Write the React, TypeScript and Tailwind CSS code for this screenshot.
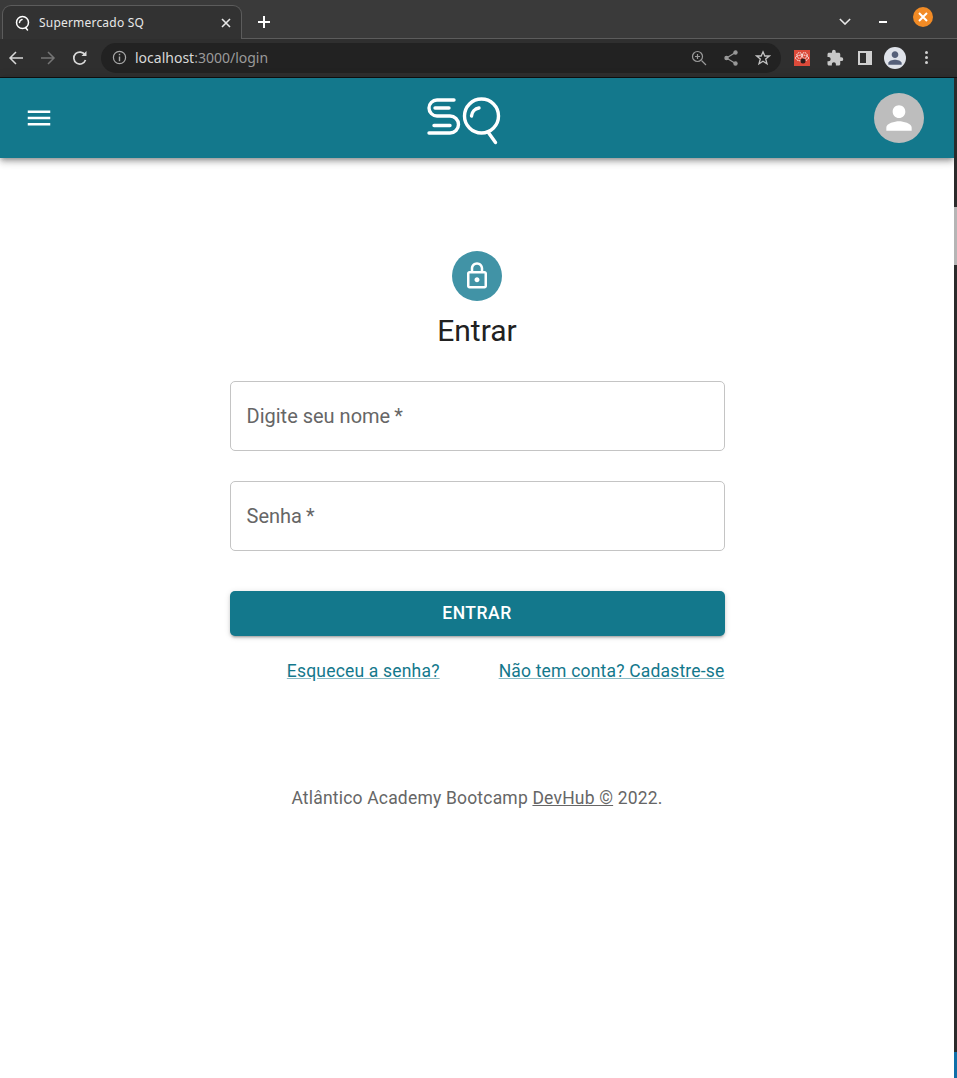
import React from "react";

const Mui = ({ d, size, className }: { d: string; size: number; className?: string }) => (
  <svg viewBox="0 0 24 24" width={size} height={size} fill="currentColor" className={className}>
    <path d={d} />
  </svg>
);

const Stroke = ({ children, size = 16, className }: { children: React.ReactNode; size?: number; className?: string }) => (
  <svg viewBox="0 0 16 16" width={size} height={size} fill="none" stroke="currentColor" strokeWidth={1.5} className={className}>
    {children}
  </svg>
);

const Logo = () => (
  <svg viewBox="0 0 76 48" width={76} height={48} fill="none" stroke="#fff" strokeWidth={3.4} strokeLinecap="round">
    <path d="M28 3H11A8 8 0 0 0 11 19H24A8.5 8.5 0 0 1 24 36H3" />
    <path d="M9 11H23M8 28.5H24" />
    <circle cx="55.5" cy="19" r="17" />
    <path d="M62 35L69.500 45.500" />
    <path d="M45.500 19A9 9 0 0 1 53 11" />
  </svg>
);

const Field = ({ label }: { label: string }) => (
  <div className="flex h-[70px] items-center rounded-[5px] border border-[#c4c4c4] px-4 text-[20px] text-[#666666]">
    {label}
    {"\u2009*"}
  </div>
);

export default function App() {
  return (
    <div className="flex min-h-[1078px] flex-col bg-white font-['Roboto',sans-serif]">
      {/* Browser tabs */}
      <div className="flex h-[39px] items-end bg-[#3a3a3a] font-['Noto_Sans',sans-serif]">
        <div className="ml-[2px] flex h-[34px] w-[240px] items-center rounded-t-[9px] border border-b-0 border-[#5c5c5c] bg-[#323232] pl-[12px] pr-[10px] text-[#e8e8e8]">
          <svg viewBox="0 0 16 16" width={16} height={16} fill="none" stroke="#fff" strokeWidth={1.5} strokeLinecap="round">
            <circle cx="7.500" cy="7.500" r="6" />
            <path d="M10.500 12.500L12.500 15M4.500 7.500A3.500 3.500 0 0 1 7 4.500" />
          </svg>
          <span className="ml-[8px] flex-1 text-[12px] tracking-[0.2px]">Supermercado SQ</span>
          <svg viewBox="0 0 10 10" width={10} height={10} stroke="#e8e8e8" strokeWidth={1.6}>
            <path d="M1 1L9 9M9 1L1 9" />
          </svg>
        </div>
        <div className="flex h-full flex-1 items-center border-b border-[#5c5c5c] pl-[15px] pr-[24px] pt-[5px] text-white">
          <svg viewBox="0 0 14 14" width={14} height={14} stroke="#fff" strokeWidth={2}>
            <path d="M7 1V13M1 7H13" />
          </svg>
          <svg viewBox="0 0 14 8" width={12} height={7} fill="none" stroke="#e8e8e8" strokeWidth={1.8} className="ml-auto">
            <path d="M1 1L7 7L13 1" />
          </svg>
          <div className="ml-[28px] h-[2px] w-[8px] bg-white" />
          <div className="ml-[26px] mt-[-9px] flex h-[20px] w-[20px] items-center justify-center rounded-full bg-[#f28b25]">
            <svg viewBox="0 0 10 10" width={10} height={10} stroke="#fff" strokeWidth={2}>
              <path d="M1 1L9 9M9 1L1 9" />
            </svg>
          </div>
        </div>
      </div>

      {/* Browser toolbar */}
      <div className="flex h-[39px] items-center border-b border-[#111111] bg-[#2f2f2f] pb-[1px]">
        <Stroke className="ml-[8px] text-[#d8d8d8]">
          <path d="M15 8H2M8 2L2 8L8 14" />
        </Stroke>
        <Stroke className="ml-[16px] text-[#757575]">
          <path d="M1 8H14M8 2L14 8L8 14" />
        </Stroke>
        <Stroke className="ml-[16px] text-[#d8d8d8]">
          <path d="M13.500 10A6 6 0 1 1 13 5" strokeWidth={1.7} />
          <path d="M14.500 1V6H9.500Z" fill="currentColor" stroke="none" />
        </Stroke>
        <div className="ml-[13px] flex h-[30px] w-[680px] items-center rounded-full bg-[#222222] pl-[11px] pr-[10px] font-['Noto_Sans',sans-serif] text-[14px]">
          <Stroke size={15} className="text-[#a8a8a8]">
            <circle cx="8" cy="8" r="6.500" strokeWidth={1.3} />
            <path d="M8 7V12M8 4V5.500" strokeWidth={1.5} />
          </Stroke>
          <span className="ml-[8px] text-[#d8d8d8]">localhost</span>
          <span className="text-[#9a9a9a]">:3000/login</span>
          <Stroke size={16} className="ml-auto text-[#9a9a9a]">
            <circle cx="6.500" cy="6.500" r="5" strokeWidth={1.2} />
            <path d="M10.500 10.500L15 15M6.500 4V9M4 6.500H9" strokeWidth={1.2} />
          </Stroke>
          <svg viewBox="0 0 16 16" width={16} height={16} fill="#9a9a9a" stroke="#9a9a9a" strokeWidth={1.2} className="ml-[16px]">
            <path d="M12.500 2.500L3.500 8L12.500 13.500" fill="none" />
            <circle cx="12.500" cy="2.500" r="1.600" />
            <circle cx="3.500" cy="8" r="1.600" />
            <circle cx="12.500" cy="13.500" r="1.600" />
          </svg>
          <Stroke size={16} className="ml-[16px] text-[#c2c2c2]">
            <path d="M8 1.800L9.800 6H14.300L10.700 9L12 13.800L8 11.200L4 13.800L5.300 9L1.700 6H6.200Z" strokeWidth={1.3} />
          </Stroke>
        </div>
        <svg viewBox="0 0 16 16" width={16} height={16} className="ml-[13px]">
          <rect width="16" height="16" fill="#dc4a3a" />
          <g fill="none" stroke="#fff" strokeWidth={1} strokeDasharray="1.500 0.700">
            <ellipse cx="8" cy="8" rx="6.500" ry="3" />
            <circle cx="5.500" cy="5.500" r="2.800" />
            <circle cx="10.500" cy="5.500" r="2.800" />
          </g>
          <circle cx="9" cy="11" r="2.500" fill="#2a1c1c" />
        </svg>
        <svg viewBox="0 0 24 24" width={18} height={18} fill="#c9c9c9" className="ml-[16px]">
          <path d="M20.500 11H19V7c0-1.100-.9-2-2-2h-4V3.500a2.500 2.500 0 0 0-5 0V5H4c-1.100 0-2 .9-2 2v3.800h1.500c1.500 0 2.700 1.200 2.700 2.700S5 16.200 3.500 16.200H2V20c0 1.100.9 2 2 2h3.800v-1.500c0-1.500 1.200-2.700 2.700-2.700s2.700 1.200 2.700 2.700V22H17c1.100 0 2-.9 2-2v-4h1.500a2.500 2.500 0 0 0 0-5z" />
        </svg>
        <div className="ml-[14px] flex h-[14px] w-[14px] justify-end border-2 border-[#d0d0d0]">
          <div className="h-full w-[4px] bg-[#d0d0d0]" />
        </div>
        <div className="ml-[12px] flex h-[22px] w-[22px] items-center justify-center overflow-hidden rounded-full bg-[#dfe3ea] text-[#55607a]">
          <Mui size={20} d="M12 12c2.210 0 4-1.790 4-4s-1.790-4-4-4-4 1.790-4 4 1.790 4 4 4zm0 2c-2.670 0-8 1.340-8 4v2h16v-2c0-2.660-5.330-4-8-4z" />
        </div>
        <div className="ml-[19px] flex flex-col gap-[2px]">
          <div className="h-[3px] w-[3px] rounded-full bg-[#d0d0d0]" />
          <div className="h-[3px] w-[3px] rounded-full bg-[#d0d0d0]" />
          <div className="h-[3px] w-[3px] rounded-full bg-[#d0d0d0]" />
        </div>
      </div>

      {/* Page + scrollbar */}
      <div className="flex flex-1">
        <div className="flex min-w-0 flex-1 flex-col">
          <header className="flex h-[80px] items-center justify-between bg-[#13788c] pl-[24px] pr-[30px] text-white shadow-[0_2px_5px_-1px_rgba(0,0,0,0.35),0_5px_6px_0_rgba(0,0,0,0.14),0_1px_12px_0_rgba(0,0,0,0.12)]">
            <Mui size={30} d="M3 18h18v-2H3v2zm0-5h18v-2H3v2zm0-7v2h18V6H3z" />
            <div className="mt-[6px]">
              <Logo />
            </div>
            <div className="flex h-[50px] w-[50px] items-center justify-center rounded-full bg-[#bdbdbd]">
              <Mui size={38} d="M12 12c2.210 0 4-1.790 4-4s-1.790-4-4-4-4 1.790-4 4 1.790 4 4 4zm0 2c-2.670 0-8 1.340-8 4v2h16v-2c0-2.660-5.330-4-8-4z" />
            </div>
          </header>

          <main className="mx-auto flex w-[495px] flex-col pt-[93px]">
            <div className="flex flex-col items-center">
              <div className="flex h-[50px] w-[50px] items-center justify-center rounded-full bg-[#4193a6] text-white">
                <Mui size={30} d="M18 8h-1V6c0-2.760-2.240-5-5-5S7 3.240 7 6v2H6c-1.100 0-2 .9-2 2v10c0 1.100.9 2 2 2h12c1.100 0 2-.9 2-2V10c0-1.100-.9-2-2-2zM9 6c0-1.660 1.340-3 3-3s3 1.340 3 3v2H9V6zm9 14H6V10h12v10zm-6-3c1.100 0 2-.9 2-2s-.9-2-2-2-2 .9-2 2 .9 2 2 2z" />
              </div>
              <h1 className="mt-[10px] text-[30px] leading-[40px] font-normal text-[#212121]">Entrar</h1>
            </div>

            <div className="mt-[30px] flex flex-col gap-[30px]">
              <Field label="Digite seu nome" />
              <Field label="Senha" />
            </div>

            <button className="mt-[40px] h-[45px] rounded-[5px] bg-[#13788c] text-[17.5px] font-medium tracking-[0.5px] text-white shadow-[0_3px_2px_-2px_rgba(0,0,0,0.2),0_2px_3px_0_rgba(0,0,0,0.14),0_1px_6px_0_rgba(0,0,0,0.12)]">
              ENTRAR
            </button>

            <div className="mt-[23px] flex justify-end gap-[59px] text-[17.5px] leading-[25px] tracking-[0.19px] text-[#13788c]">
              <a className="underline decoration-[#13788c80]">Esqueceu a senha?</a>
              <a className="underline decoration-[#13788c80]">Não tem conta? Cadastre-se</a>
            </div>

            <p className="mt-[102px] text-center text-[17.5px] leading-[25px] tracking-[0.19px] text-[#666666]">
              Atlântico Academy Bootcamp <span className="underline">DevHub ©</span> 2022.
            </p>
          </main>
        </div>

        <div className="flex w-[3px] flex-col bg-[#2b2b2b]">
          <div className="mt-[129px] h-[58px] bg-[#b5b5b5]" />
          <div className="mt-auto h-[26px] bg-[#0f6fa8]" />
        </div>
      </div>
    </div>
  );
}
